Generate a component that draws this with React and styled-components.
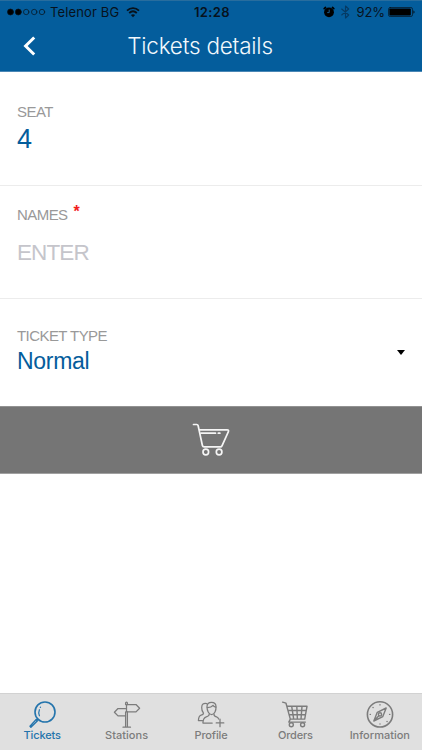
import React from "react"
import styled, { createGlobalStyle } from "styled-components"

const colors = {
  primary: "#045d9c",
  label: "#999999",
  placeholder: "#c5c5cb",
  line: "#ececec",
  bar: "#757575",
  tabs: "#e0e0e0",
  tab: "#7c7c7c"
}

const GlobalStyle = createGlobalStyle`
  * { box-sizing: border-box; }
  body {
    margin: 0;
    background: #fff;
    font-family: "Liberation Sans", Arial, sans-serif;
  }
`

const Screen = styled.div`
  display: flex;
  flex-direction: column;
  height: 750px;
  overflow: hidden;
`

const Header = styled.header`
  flex: none;
  height: 72px;
  background: ${colors.primary};
  border-top: 1px solid #286d9e;
  border-bottom: 1px solid #4a87b5;
  font-family: Inter, sans-serif;
`

const StatusBar = styled.div`
  height: 22px;
  display: grid;
  grid-template-columns: 1fr auto 1fr;
  align-items: center;
  padding: 0 6px 0 7px;
  color: #07121c;
  font-size: 13px;
  line-height: 22px;
`

const StatusGroup = styled.div`
  display: flex;
  align-items: center;
  justify-content: ${props => props.$end ? "flex-end" : "flex-start"};
`

const Carrier = styled.span`
  margin: 0 7px 0 4px;
  letter-spacing: 0.13px;
`

const Clock = styled.span`
  padding-left: 1px;
  font-weight: 600;
  letter-spacing: 0.4px;
`

const Battery = styled.span`
  margin: 0 3px 0 7px;
  letter-spacing: -0.1px;
`

const TitleBar = styled.div`
  height: 46px;
  display: grid;
  grid-template-columns: 60px 1fr 82px;
  align-items: center;
`

const BackButton = styled.button`
  display: flex;
  padding: 0 0 0 22px;
  border: 0;
  background: none;
`

const Title = styled.h1`
  margin: 0;
  color: #f2f8fc;
  font-size: 22.5px;
  font-weight: 300;
  line-height: 46px;
  letter-spacing: -0.22px;
  text-align: center;
  white-space: nowrap;
`

const Field = styled.section`
  flex: none;
  height: ${props => props.$height}px;
  padding: ${props => props.$top}px 17px 0;
  border-bottom: ${props => props.$last ? "0" : `1px solid ${colors.line}`};
`

const Label = styled.div`
  display: flex;
  color: ${colors.label};
  font-size: 15px;
  line-height: 18px;
  letter-spacing: -0.56px;
`

const Required = styled.span`
  margin: -3px 0 0 6px;
  color: #f2201c;
  font-size: 16px;
  font-weight: bold;
`

const Value = styled.div`
  display: flex;
  align-items: center;
  justify-content: space-between;
  margin-top: ${props => props.$gap}px;
  color: ${props => props.$muted ? colors.placeholder : colors.primary};
  font-size: ${props => props.$size}px;
  line-height: 30px;
  letter-spacing: ${props => props.$spacing || 0}px;
`

const Caret = styled.span`
  margin: -18px 0 0;
  border: 4.5px solid transparent;
  border-top: 5px solid #000;
  border-bottom: 0;
`

const CartButton = styled.button`
  flex: none;
  display: flex;
  justify-content: center;
  height: 68px;
  padding: 16px 0 0;
  border: 0;
  border-top: 1px solid #929292;
  border-bottom: 1px solid #a0a0a0;
  background: ${colors.bar};
`

const TabBar = styled.nav`
  display: grid;
  grid-template-columns: repeat(5, 1fr);
  height: 57px;
  margin-top: auto;
  border-top: 1px solid #d2d2d2;
  background: ${colors.tabs};
`

const Tab = styled.a`
  display: flex;
  flex-direction: column;
  align-items: center;
  padding-top: 7px;
  color: ${props => props.$active ? "#2474ac" : colors.tab};
  font-family: Inter, sans-serif;
  font-size: 11px;
  font-weight: 500;
  line-height: 13px;
  letter-spacing: ${props => props.$spacing || 0}px;
`

const Icon = styled.svg`
  display: block;
  flex: none;
  fill: none;
  stroke: currentColor;
  stroke-width: ${props => props.$stroke || 1.4};
  stroke-linecap: round;
  stroke-linejoin: round;
`

const Signal = () => (
  <Icon width="39" height="10" viewBox="0 0 39 10" $stroke={0.7}>
    <circle cx="3.5" cy="5" r="3" fill="#000" />
    <circle cx="11.3" cy="5" r="3" fill="#000" />
    <circle cx="19.2" cy="5" r="2.7" />
    <circle cx="27.2" cy="5" r="2.7" />
    <circle cx="35" cy="5" r="2.7" />
  </Icon>
)

const Wifi = () => (
  <Icon width="14" height="11" viewBox="0 0 14 11" $stroke={1.8}>
    <path d="M1 3.7C4.5.2 9.5.2 13 3.7M3.2 6C5.5 3.8 8.5 3.8 10.8 6" strokeLinecap="butt" />
    <path d="M7 10.3 4.9 8.1Q7 6.3 9.1 8.1Z" fill="currentColor" stroke="none" />
  </Icon>
)

const Alarm = () => (
  <Icon width="12" height="12" viewBox="0 0 12 12">
    <circle cx="6" cy="6.3" r="4.9" fill="#000" stroke="none" />
    <path d="M1.2 2.6 2.5 1.5M10.8 2.6 9.5 1.5" stroke="#000" strokeWidth="1.7" />
    <path d="M6.2 4v2.6H4.6" stroke="#1c659b" strokeWidth="0.9" />
  </Icon>
)

const Bluetooth = () => (
  <Icon width="15" height="14" viewBox="-6 0 15 14" $stroke={1.1}>
    <path d="m.7 4 7 6-3.2 3V1l3.2 3-7 6" stroke="#063a63" />
  </Icon>
)

const BatteryIcon = () => (
  <Icon width="28" height="10" viewBox="0 0 28 10" $stroke={0.7}>
    <rect x=".5" y=".5" width="24" height="9" rx="1.7" />
    <rect x="1.4" y="1.4" width="21.4" height="7.2" rx=".8" fill="#000" stroke="none" />
    <path d="M25.5 3.2q2 1.8 0 3.6z" fill="#000" stroke="none" />
  </Icon>
)

const Chevron = () => (
  <Icon width="14" height="20" viewBox="0 0 14 20" color="#fff" $stroke={3}>
    <path d="M12.2 1.5 3.6 10l8.6 8.5" strokeLinecap="butt" strokeLinejoin="miter" />
  </Icon>
)

const Cart = () => (
  <Icon width="38" height="34" viewBox="0 0 38 34" color="#f5f5f5" $stroke={1.7}>
    <path d="M1.5 1.5h3.3q1 0 1.3 1L10.4 22.5q.3 1.4 1.7 1.4h16.2q1.3 0 1.8-1.3L36.4 8.7q.6-1.9-1.3-1.9H7.2" />
    <path d="M9 10.2h14.5M26.3 10.2h1.6" />
    <circle cx="13.8" cy="29" r="2.8" />
    <circle cx="27.1" cy="29" r="2.8" />
  </Icon>
)

const Magnifier = () => (
  <Icon width="28" height="28" viewBox="0 0 28 28">
    <circle cx="17" cy="11" r="10" strokeWidth="1.6" />
    <path d="m9.8 18-1.2 1.2M8.2 18.4l1.3 1.3-6.6 6.5-.9-.9z" />
    <path d="M11.4 14.8q-1.3-3 0-6.1M12.3 6.4l.2-.2" strokeWidth="1.2" />
  </Icon>
)

const Signpost = () => (
  <Icon width="28" height="28" viewBox="0 0 28 28" $stroke={1.25}>
    <path d="M12.6 3.5V2q0-1 .9-1t.9 1v1.5M12.6 10.9V26M14.4 10.9V26M10 26.2h7.5" />
    <path d="M13.5 3.5H23l3.6 3.7-3.6 3.7h-9.5zM12.5 7.5H5L1.4 11.2 5 14.9h7.5" />
  </Icon>
)

const Person = () => (
  <Icon width="28" height="28" viewBox="0 0 28 28" $stroke={1.25}>
    <path d="M10 5.7q0-4.3 4.5-4.3T19 5.8c.2 3.7-1.4 7.8-4.4 7.8S10 9.4 10 5.7z" />
    <path d="M10.3 6.5q4 .1 5.7-2.2.8 1.5 2.8 1.9M9.7 2.6Q4.8 1.7 4.7 6.4q-.1 3.4 1.8 5.7-.1 1.5-2.4 2.1-2.5.7-2.7 5.4h4M12.2 13.1q.1 2-2.9 2.8-3.2.9-3.4 6.1h9.3M17 13.2q-.1 2 2.5 2.7 1.7.5 2.1 2.1M23 18.1v7.6M19.2 21.9h7.6" />
  </Icon>
)

const Basket = () => (
  <Icon width="28" height="28" viewBox="0 0 28 28" $stroke={1.4}>
    <path d="M1.6 1.2 5 2.2l4.3 15.9-1.5 3h16.6M5.9 5.3H26l-2.3 12.8H9.3M7.1 9.5h18M8.2 13.7h16.2M10.7 5.3l2 12.8M15.8 5.3l.6 12.8M21 5.3l-1 12.8" />
    <circle cx="10.3" cy="23.8" r="2" />
    <circle cx="21.6" cy="23.8" r="2" />
  </Icon>
)

const Compass = () => (
  <Icon width="28" height="28" viewBox="0 0 28 28">
    <circle cx="14" cy="13.4" r="12.6" strokeWidth="1.6" />
    <path d="m20.2 7-3.4 8.6-9 4.4 3.5-8.7zM7.8 20l5-5.2" />
    <circle cx="14" cy="13.4" r="1.6" />
    <path d="M14 3.7v.2M14 22.9v.2M4.2 13.4h.2M23.6 13.4h.2M7 6.5l.1.1M21 20.4l.1.1" />
  </Icon>
)

const tabs = [
  { name: "Tickets", icon: Magnifier, active: true, spacing: -0.15 },
  { name: "Stations", icon: Signpost, spacing: 0.04 },
  { name: "Profile", icon: Person, spacing: -0.15 },
  { name: "Orders", icon: Basket, spacing: -0.15 },
  { name: "Information", icon: Compass, spacing: 0 }
]

export default function App() {
  return (
    <Screen>
      <GlobalStyle />
      <Header>
        <StatusBar>
          <StatusGroup>
            <Signal />
            <Carrier>Telenor BG</Carrier>
            <Wifi />
          </StatusGroup>
          <Clock>12:28</Clock>
          <StatusGroup $end>
            <Alarm />
            <Bluetooth />
            <Battery>92%</Battery>
            <BatteryIcon />
          </StatusGroup>
        </StatusBar>
        <TitleBar>
          <BackButton aria-label="Back"><Chevron /></BackButton>
          <Title>Tickets details</Title>
        </TitleBar>
      </Header>

      <Field $height={114} $top={31}>
        <Label>SEAT</Label>
        <Value $gap={3} $size={27}>4</Value>
      </Field>
      <Field $height={113} $top={20}>
        <Label>NAMES <Required>*</Required></Label>
        <Value $gap={14} $size={22.5} $spacing={-0.9} $muted>ENTER</Value>
      </Field>
      <Field $height={107} $top={28} $last>
        <Label>TICKET TYPE</Label>
        <Value $gap={1} $size={23} $spacing={-0.3}>Normal <Caret /></Value>
      </Field>
      <CartButton aria-label="Add to cart"><Cart /></CartButton>

      <TabBar>
        {tabs.map(({ name, icon: TabIcon, active, spacing }) => (
          <Tab key={name} $active={active} $spacing={spacing}>
            <TabIcon />
            {name}
          </Tab>
        ))}
      </TabBar>
    </Screen>
  )
}
